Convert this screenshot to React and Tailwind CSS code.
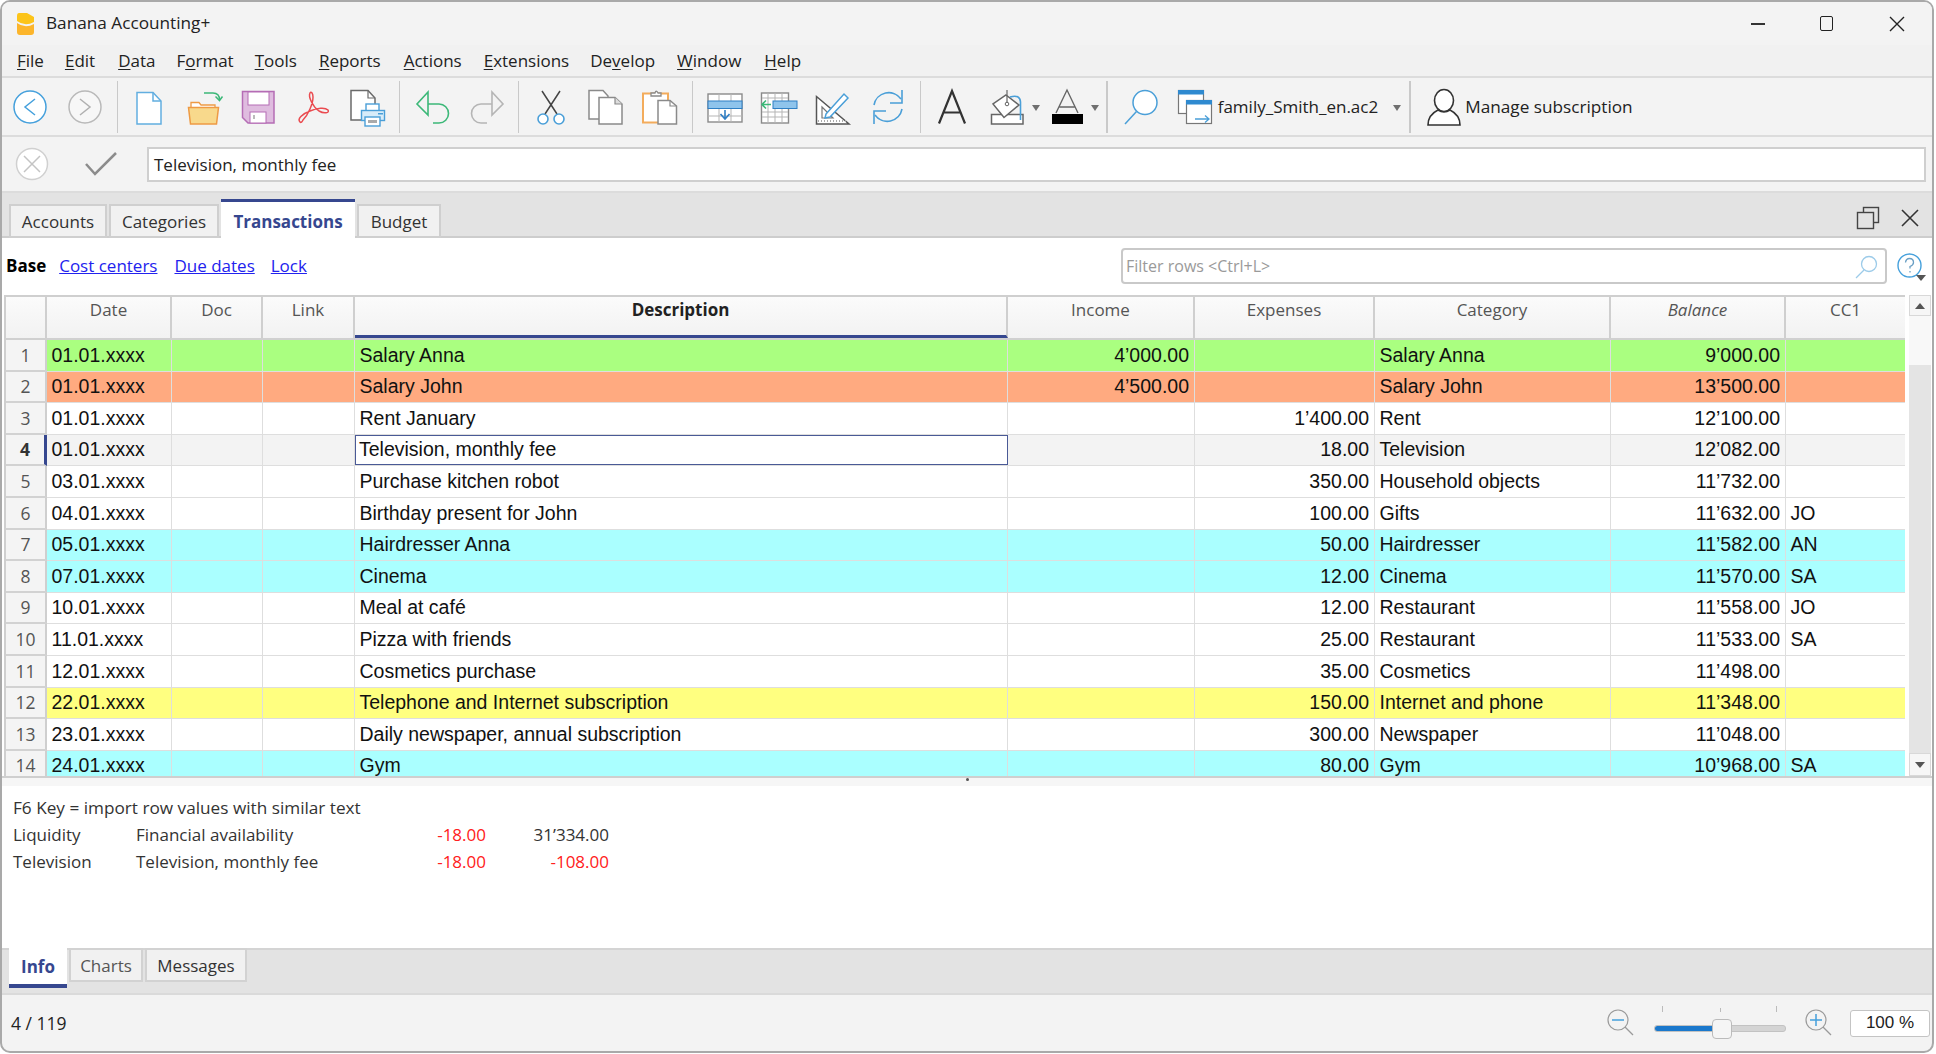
import React from "react";

const ui = { fontFamily: '"Open Sans", "Noto Sans", sans-serif' };

const S = ({ children, w = 40, h = 40 }) => (
  <svg width={w} height={h} viewBox={`0 0 ${w} ${h}`} fill="none" className="shrink-0">
    {children}
  </svg>
);

const Btn = ({ children }) => (
  <div className="w-[54.4px] h-[40px] shrink-0 flex items-center justify-center">{children}</div>
);

const Sep = ({ cls }) => <div className={"w-[1.5px] h-[52px] bg-[#c9c9c9] shrink-0 " + cls} />;

const B = "#4a9fd8";
const G = "#8a8a8a";
const D = "#444";

const Back = () => (
  <S>
    <circle cx="20" cy="20" r="16" fill="#fff" stroke="#45a0dc" strokeWidth="1.5" />
    <path d="M25 12 L15 20 L25 28" stroke="#45a0dc" strokeWidth="1.5" />
  </S>
);
const Fwd = () => (
  <S>
    <circle cx="20" cy="20" r="16" fill="#f7f7f7" stroke="#b9b9b9" strokeWidth="1.5" />
    <path d="M15 12 L25 20 L15 28" stroke="#b0b0b0" strokeWidth="1.5" />
  </S>
);
const NewDoc = () => (
  <S>
    <path d="M8 5.5 H24 L32 14 V37 H8 Z" fill="#fff" stroke="#62aee0" strokeWidth="1.5" />
    <path d="M24 5.5 V14 H32" stroke="#62aee0" strokeWidth="1.5" />
  </S>
);
const Open = () => (
  <S>
    <path d="M7 20 V15.5 H15 L17 18 H31 V20" fill="#fff" stroke="#ee9a44" strokeWidth="1.3" />
    <path d="M4.5 20.5 H34.5 L32.5 37 H6.5 Z" fill="#f8d98c" stroke="#ee9a44" strokeWidth="1.5" />
    <path d="M20 6 H29 Q35.5 6 35.5 13" stroke="#3cb878" strokeWidth="1.5" />
    <path d="M31.5 9.5 L35.5 13.5 L38.5 9.5" stroke="#3cb878" strokeWidth="1.5" />
  </S>
);
const Save = () => (
  <S>
    <path d="M4.5 4.5 H36 V36 H10 L4.5 30.5 Z" fill="#dfbcdf" stroke="#b56db5" strokeWidth="1.5" />
    <rect x="10" y="5" width="21" height="13" fill="#fff" stroke="#b56db5" />
    <rect x="12" y="25" width="16" height="11" fill="#fff" stroke="#b56db5" />
    <rect x="15" y="28" width="2" height="4" fill="#bbb" />
  </S>
);
const Pdf = () => (
  <S>
    <path
      d="M7 35 C4 32 9 27 17 24 C24 21 32 20 35 23 C37 26 31 27 26 24 C20 20 15 10 17 6 C18 4 20 6 20 10 C20 17 15 28 10 33 C9 35 8 36 7 35 Z"
      stroke="#ea4b50"
      strokeWidth="1.5"
    />
  </S>
);
const Print = () => (
  <S>
    <path d="M14 33 H4 V3.5 H21 L28 11 V18" fill="#fff" stroke="#6a6a6a" strokeWidth="1.5" />
    <path d="M21 3.5 V11 H28" stroke="#6a6a6a" strokeWidth="1.2" />
    <rect x="19" y="17" width="13" height="7" fill="#fff" stroke={B} strokeWidth="1.4" />
    <rect x="14.5" y="23.5" width="23" height="10" fill="#d7ecf9" stroke={B} strokeWidth="1.4" />
    <rect x="18" y="30" width="15" height="9" fill="#fff" stroke={B} strokeWidth="1.4" />
    <rect x="21" y="33" width="9" height="3" fill="#aaa" />
    <rect x="31" y="26" width="5" height="1.5" fill={B} />
  </S>
);
const Undo = ({ c = "#3cb878", flip }) => (
  <S>
    <g transform={flip ? "translate(40,0) scale(-1,1)" : undefined}>
      <path d="M15 5 L4 17 L15 28 Z" stroke={c} strokeWidth="1.6" fill="#f3f3f3" />
      <path d="M15 17 H26 A9.5 9.5 0 0 1 26 36 H20" stroke={c} strokeWidth="1.6" />
    </g>
  </S>
);
const Cut = () => (
  <S>
    <path d="M11 4 L26 27 M29 4 L14 27" stroke={D} strokeWidth="1.5" />
    <circle cx="12" cy="32" r="5" stroke={B} strokeWidth="1.6" fill="#fff" />
    <circle cx="28" cy="32" r="5" stroke={B} strokeWidth="1.6" fill="#fff" />
  </S>
);
const Copy = () => (
  <S>
    <path d="M4 3.5 H18 L23 9 V32 H4 Z" fill="#fff" stroke={G} strokeWidth="1.5" />
    <path d="M14 10.5 H30 L37 17 V37 H14 Z" fill="#fff" stroke={G} strokeWidth="1.5" />
    <path d="M30 10.5 V17 H37" fill="#ddd" stroke={G} strokeWidth="1.2" />
  </S>
);
const Paste = () => (
  <S>
    <rect x="3" y="6.5" width="25" height="29" fill="#fff" stroke="#f3ac5c" strokeWidth="2" />
    <path d="M11 9 V6 H15 Q16 2.5 18 6 H21 V9 Z" fill="#fff" stroke={G} strokeWidth="1.3" />
    <path d="M18 13.5 H30 L36.5 19 V37 H18 Z" fill="#fff" stroke={G} strokeWidth="1.5" />
    <path d="M30 13.5 V19 H36.5" stroke={G} strokeWidth="1.2" />
  </S>
);
const Table1 = () => (
  <S>
    <rect x="3" y="7" width="34" height="28" fill="#fff" stroke={G} strokeWidth="1.4" />
    <path d="M14 7 V14 M26 7 V14 M14 22 V35 M26 22 V35 M3 29 H37" stroke="#b5b5b5" />
    <rect x="3" y="14" width="34" height="7.5" fill="#8fc4ec" stroke="#2f7fc4" />
    <path d="M20 23 V31 M15.5 27 L20 32 L24.5 27" stroke="#2f7fc4" strokeWidth="1.6" />
  </S>
);
const Table2 = () => (
  <S>
    <rect x="2.5" y="6" width="27" height="30" fill="#fff" stroke={G} strokeWidth="1.4" />
    <path d="M9 6 V36 M16 6 V36 M23 6 V36 M3 11 H29 M3 25 H29 M3 30 H29" stroke="#b5b5b5" />
    <rect x="14" y="14" width="24" height="7.5" fill="#8fc4ec" stroke="#2f7fc4" />
    <path d="M3 17.5 H12 M7 13.5 L3 17.5 L7 21.5" stroke="#3cb878" strokeWidth="1.6" />
  </S>
);
const Square = () => (
  <S>
    <path d="M3.5 9.5 L36 37 H3.5 Z" fill="#fff" stroke="#555" strokeWidth="1.5" />
    <path d="M9 20 L20 31 H9 Z" stroke="#777" strokeWidth="1.2" />
    <path d="M5 34 H33" stroke="#aaa" strokeDasharray="1 2" strokeWidth="2" />
    <path d="M13 27 L31 7 L35 11 L17 30 L12 31 Z" fill="#fff" stroke={B} strokeWidth="1.5" />
  </S>
);
const Refresh = () => (
  <S>
    <path d="M6 18 A15 15 0 0 1 33 12" stroke={B} strokeWidth="1.6" />
    <path d="M34 3 V16 H22" stroke={B} strokeWidth="1.6" />
    <path d="M34 22 A15 15 0 0 1 7 28" stroke={B} strokeWidth="1.6" />
    <path d="M6 37 V24 H18" stroke={B} strokeWidth="1.6" />
  </S>
);
const BigA = () => (
  <S>
    <path d="M6 36.5 L19 4 L32 36.5 M10.5 25.5 H27.5" stroke="#333" strokeWidth="2.2" />
  </S>
);
const Fill = () => (
  <S>
    <rect x="4.5" y="27.5" width="31.5" height="9.5" fill="#fff" stroke="#666" strokeWidth="1.5" />
    <path d="M19 8 L32 18 L17 30.5 L6 17 Z" fill="#fff" stroke="#666" strokeWidth="1.5" />
    <path d="M20 3 V16" stroke="#666" strokeWidth="1.2" />
    <circle cx="20" cy="17" r="1.8" stroke="#666" />
    <path d="M23 10 Q33 7 33.5 15 V33" stroke={B} strokeWidth="1.6" />
  </S>
);
const ColorA = () => (
  <S w={36}>
    <path d="M6 26 L17 3 L28 26 M9.5 20 H24.5" stroke="#666" strokeWidth="1.4" />
    <rect x="2" y="27" width="31" height="10" fill="#000" />
  </S>
);
const Search = () => (
  <S>
    <circle cx="27" cy="15.5" r="12" fill="#fff" stroke={B} strokeWidth="1.5" />
    <path d="M18.5 24.5 L7 37" stroke={B} strokeWidth="1.5" />
  </S>
);
const FileIcon = () => (
  <S>
    <rect x="3.5" y="3.5" width="25" height="23" fill="#fff" stroke="#777" strokeWidth="1.2" />
    <rect x="3" y="3" width="26" height="4.5" fill="#2f8ad0" />
    <rect x="11.5" y="13.5" width="25" height="23" fill="#fff" stroke="#777" strokeWidth="1.2" />
    <rect x="11" y="13" width="26" height="4.5" fill="#2f8ad0" />
    <path d="M20 32 H34 M30 28.5 L34 32 L30 35.5" stroke={B} strokeWidth="1.3" />
  </S>
);
const User = () => (
  <S>
    <ellipse cx="20" cy="13.5" rx="9.5" ry="11" fill="#fff" stroke="#333" strokeWidth="1.6" />
    <path d="M4 38 C4 30 8 26 14 23 Q20 27 26 23 C32 26 36 30 36 38 Z" fill="#fff" stroke="#333" strokeWidth="1.6" />
  </S>
);
const Caret = ({ cls = "" }) => (
  <div className={"w-0 h-0 border-l-[4.5px] border-r-[4.5px] border-t-[6px] border-l-transparent border-r-transparent border-t-[#6f6f6f] shrink-0 " + cls} />
);

const Underl = ({ t, i }) => (
  <span>
    {t.slice(0, i)}
    <span className="underline underline-offset-2">{t[i]}</span>
    {t.slice(i + 1)}
  </span>
);

const menus = [
  ["File", 0, "ml-[15px]"],
  ["Edit", 0, "ml-[21px]"],
  ["Data", 0, "ml-[23px]"],
  ["Format", 1, "ml-[21px]"],
  ["Tools", 0, "ml-[21px]"],
  ["Reports", 0, "ml-[22px]"],
  ["Actions", 0, "ml-[23px]"],
  ["Extensions", 0, "ml-[22px]"],
  ["Develop", 2, "ml-[21px]"],
  ["Window", 0, "ml-[22px]"],
  ["Help", 0, "ml-[23px]"],
];

const cols = [
  ["Date", "w-[125px]"],
  ["Doc", "w-[91px]"],
  ["Link", "w-[92px]"],
  ["Description", "w-[653px]"],
  ["Income", "w-[187px]"],
  ["Expenses", "w-[180px]"],
  ["Category", "w-[236px]"],
  ["Balance", "w-[175px]"],
  ["CC1", "w-[121px]"],
];

const GREEN = "bg-[#aaff80]";
const ORANGE = "bg-[#ffaa80]";
const CYAN = "bg-[#aaffff]";
const YELLOW = "bg-[#ffff80]";
const CUR = "bg-[#f3f3f3]";
const WHITE = "bg-white";

const rows = [
  [1, "01.01.xxxx", "Salary Anna", "4’000.00", "", "Salary Anna", "9’000.00", "", GREEN],
  [2, "01.01.xxxx", "Salary John", "4’500.00", "", "Salary John", "13’500.00", "", ORANGE],
  [3, "01.01.xxxx", "Rent January", "", "1’400.00", "Rent", "12’100.00", "", WHITE],
  [4, "01.01.xxxx", "Television, monthly fee", "", "18.00", "Television", "12’082.00", "", CUR],
  [5, "03.01.xxxx", "Purchase kitchen robot", "", "350.00", "Household objects", "11’732.00", "", WHITE],
  [6, "04.01.xxxx", "Birthday present for John", "", "100.00", "Gifts", "11’632.00", "JO", WHITE],
  [7, "05.01.xxxx", "Hairdresser Anna", "", "50.00", "Hairdresser", "11’582.00", "AN", CYAN],
  [8, "07.01.xxxx", "Cinema", "", "12.00", "Cinema", "11’570.00", "SA", CYAN],
  [9, "10.01.xxxx", "Meal at café", "", "12.00", "Restaurant", "11’558.00", "JO", WHITE],
  [10, "11.01.xxxx", "Pizza with friends", "", "25.00", "Restaurant", "11’533.00", "SA", WHITE],
  [11, "12.01.xxxx", "Cosmetics purchase", "", "35.00", "Cosmetics", "11’498.00", "", WHITE],
  [12, "22.01.xxxx", "Telephone and Internet subscription", "", "150.00", "Internet and phone", "11’348.00", "", YELLOW],
  [13, "23.01.xxxx", "Daily newspaper, annual subscription", "", "300.00", "Newspaper", "11’048.00", "", WHITE],
  [14, "24.01.xxxx", "Gym", "", "80.00", "Gym", "10’968.00", "SA", CYAN],
];

const Cell = ({ w, right, children, cls = "border-r border-[#dedede] pl-[4.5px] pr-[5px]" }) => (
  <div
    className={
      "h-full shrink-0 flex items-center overflow-hidden whitespace-nowrap " +
      w + " " + (right ? "justify-end " : "") + cls
    }
  >
    {children}
  </div>
);

const Row = ({ r }) => {
  const [n, date, desc, inc, exp, cat, bal, cc, bg] = r;
  const cur = n === 4;
  return (
    <div className={"flex h-[31.6px] shrink-0 border-b border-[#dedede] text-[19.5px] text-[#111] " + bg} style={{ fontFamily: '"Liberation Sans", Arial, sans-serif' }}>
      <div
        className={
          "w-[41px] h-[calc(100%+1px)] shrink-0 flex items-center justify-center text-[17.5px] bg-[#f4f4f4] border-b-2 border-[#d2d2d2] " +
          (cur ? "font-bold text-[#333] border-r-[3px] border-r-[#36478f]" : "text-[#555] border-r-2 border-r-[#cfcfcf]")
        }
        style={ui}
      >
        {n}
      </div>
      <Cell w="w-[125px]">{date}</Cell>
      <Cell w="w-[91px]" />
      <Cell w="w-[92px]" />
      <Cell w="w-[653px]" cls={cur ? "border-[1.5px] border-[#4a5a96] bg-white px-[3px]" : undefined}>
        {desc}
      </Cell>
      <Cell w="w-[187px]" right>{inc}</Cell>
      <Cell w="w-[180px]" right>{exp}</Cell>
      <Cell w="w-[236px]">{cat}</Cell>
      <Cell w="w-[175px]" right>{bal}</Cell>
      <Cell w="w-[121px]">{cc}</Cell>
    </div>
  );
};

const Tab = ({ children, active, cls = "" }) => (
  <div
    className={
      "flex items-center justify-center shrink-0 text-[17px] " +
      (active
        ? "bg-white text-[#36478f] font-bold border-t-[3px] border-[#36478f] h-[41px] -mb-[4px] pt-[1px] "
        : "bg-[#f1f1f1] text-[#333] border-2 border-[#cfcfcf] h-[34px] -mb-[2px] pt-[1px] ") +
      cls
    }
  >
    {children}
  </div>
);

export default function App() {
  return (
    <div className="w-[1936px] h-[1054px] bg-white overflow-hidden" style={ui}>
      <div className="w-[1934px] h-[1053px] rounded-[10px] border-2 border-[#a9a9a9] bg-[#f3f3f3] flex flex-col overflow-hidden text-[#222]">
        {/* Title bar */}
        <div className="h-[43px] shrink-0 flex items-center bg-[#f3f3f3]">
          <svg width="20" height="22" viewBox="0 0 20 22" className="ml-[14px] shrink-0">
            <path d="M3 0 H11 L18 4 V9 Q9 14 1 8 V3 Q1 0 3 0 Z" fill="#fcc419" />
            <path d="M1 10 Q9 16 18 11 V19 Q18 22 15 22 H4 Q1 22 1 19 Z" fill="#fcb52b" />
          </svg>
          <div className="ml-[10px] text-[17.2px] -mt-[2px]">Banana Accounting+</div>
          <div className="ml-auto flex items-center">
            <div className="w-[14px] h-[1.5px] bg-[#333] mt-[1px]" />
            <div className="w-[13px] h-[15px] border-[1.5px] border-[#222] rounded-[2px] ml-[55px]" />
            <svg width="16" height="16" viewBox="0 0 16 16" className="ml-[56px] mr-[27px]">
              <path d="M1 1 L15 15 M15 1 L1 15" stroke="#222" strokeWidth="1.4" />
            </svg>
          </div>
        </div>
        {/* Menu */}
        <div className="h-[31px] shrink-0 flex items-center text-[17px] bg-[#f1f1f1] border-b-2 border-[#dcdcdc] box-content">
          {menus.map(([t, i, c]) => (
            <div key={t} className={c}>
              <Underl t={t} i={i} />
            </div>
          ))}
        </div>
        {/* Toolbar */}
        <div className="h-[59px] shrink-0 flex items-center pl-[1px] border-b-2 border-[#dcdcdc] text-[17px]">
          <Btn><Back /></Btn>
          <Btn><Fwd /></Btn>
          <Sep cls="ml-[5px]" />
          <div className="w-[4px] shrink-0" />
          <Btn><NewDoc /></Btn>
          <Btn><Open /></Btn>
          <Btn><Save /></Btn>
          <Btn><Pdf /></Btn>
          <Btn><Print /></Btn>
          <Sep cls="ml-[4.7px]" />
          <div className="w-[5.3px] shrink-0" />
          <Btn><Undo /></Btn>
          <Btn><Undo c="#b5b5b5" flip /></Btn>
          <Sep cls="ml-[3.4px]" />
          <div className="w-[4.5px] shrink-0" />
          <Btn><Cut /></Btn>
          <Btn><Copy /></Btn>
          <Btn><Paste /></Btn>
          <Sep cls="ml-[4.8px]" />
          <div className="w-[4px] shrink-0" />
          <Btn><Table1 /></Btn>
          <Btn><Table2 /></Btn>
          <Btn><Square /></Btn>
          <Btn><Refresh /></Btn>
          <Sep cls="ml-[5px]" />
          <div className="w-[4px] shrink-0" />
          <Btn><BigA /></Btn>
          <Btn><Fill /></Btn>
          <Caret cls="-ml-[2px] mt-[2px]" />
          <div className="w-[10px] shrink-0" />
          <ColorA />
          <Caret cls="ml-[4.5px] mt-[2px]" />
          <Sep cls="ml-[7.5px]" />
          <div className="ml-[10px] shrink-0"><Search /></div>
          <div className="ml-[17px] shrink-0"><FileIcon /></div>
          <div className="ml-[3px] whitespace-nowrap w-[175px] shrink-0">family_Smith_en.ac2</div>
          <Caret cls="mt-[2px]" />
          <Sep cls="ml-[8.5px]" />
          <div className="ml-[13.5px] shrink-0"><User /></div>
          <div className="ml-[1px] whitespace-nowrap text-[17.2px]">Manage subscription</div>
        </div>
        {/* Formula bar */}
        <div className="h-[56px] shrink-0 flex items-center border-b-2 border-[#dcdcdc] box-border">
          <svg width="36" height="36" viewBox="0 0 36 36" className="ml-[12px] shrink-0">
            <circle cx="18" cy="18" r="15.5" fill="#fff" stroke="#d0d0d0" strokeWidth="1.5" />
            <path d="M10 10 L26 26 M26 10 L10 26" stroke="#c4c4c4" strokeWidth="1.5" />
          </svg>
          <svg width="36" height="28" viewBox="0 0 36 28" className="ml-[34px] shrink-0">
            <path d="M2 14 L11 24 L32 3" stroke="#8c8c8c" strokeWidth="2.5" fill="none" />
          </svg>
          <div className="ml-[27px] w-[1779px] h-[35px] bg-white border-2 border-[#cfcfcf] flex items-center px-[5px] text-[17px]">
            <span className="pt-[1px]">Television, monthly fee</span>
          </div>
        </div>
        {/* Tabs strip */}
        <div className="h-[45px] shrink-0 bg-[#e3e3e3] flex items-end pl-[7px] gap-[2px] relative border-b-2 border-[#cdcdcd]">
          <Tab cls="w-[98px]">Accounts</Tab>
          <Tab cls="w-[110px]">Categories</Tab>
          <Tab active cls="w-[134px] z-10">Transactions</Tab>
          <Tab cls="w-[84px]">Budget</Tab>
          <div className="ml-auto self-center flex items-center pr-[12px] mt-[6px]">
            <svg width="24" height="24" viewBox="0 0 24 24">
              <rect x="7.5" y="1.5" width="15" height="15" fill="#e3e3e3" stroke="#444" strokeWidth="1.4" />
              <rect x="1.5" y="6.5" width="16" height="16" fill="#e3e3e3" stroke="#444" strokeWidth="1.4" />
            </svg>
            <svg width="20" height="20" viewBox="0 0 20 20" className="ml-[20px]">
              <path d="M2 2 L18 18 M18 2 L2 18" stroke="#333" strokeWidth="1.6" />
            </svg>
          </div>
        </div>
        {/* Sub views */}
        <div className="h-[57px] shrink-0 bg-white flex items-center pl-[4px] pb-[2px] text-[17px]">
          <div className="font-bold text-black">Base</div>
          <div className="ml-[13px] text-[#2222ee] underline">Cost centers</div>
          <div className="ml-[17px] text-[#2222ee] underline">Due dates</div>
          <div className="ml-[16px] text-[#2222ee] underline">Lock</div>
          <div className="ml-auto w-[766px] h-[36px] border-2 border-[#c9c9c9] rounded-[4px] flex items-center px-[3px] text-[#9a9a9a] text-[16px] justify-between">
            <span>Filter rows &lt;Ctrl+L&gt;</span>
            <svg width="26" height="26" viewBox="0 0 26 26" className="mr-[2px]">
              <circle cx="15" cy="11" r="7.5" fill="none" stroke="#9ccbe9" strokeWidth="1.3" />
              <path d="M10 17 L2 25" stroke="#9ccbe9" strokeWidth="1.3" />
            </svg>
          </div>
          <div className="relative ml-[9.5px] mr-[10.5px] w-[25px] h-[25px]">
            <svg width="25" height="25" viewBox="0 0 25 25">
              <circle cx="12.5" cy="12.5" r="11.5" fill="none" stroke="#45a0dc" strokeWidth="1.4" />
              <path d="M8.5 9.5 Q9 5.5 12.5 5.5 Q16.5 5.5 16.5 9.5 Q16.5 12 13 13.5 V15.5 M13 18 V19.5" fill="none" stroke="#6a9fc4" strokeWidth="1.3" />
            </svg>
            <div className="absolute -right-[4px] bottom-[-3px] w-0 h-0 border-l-[5px] border-r-[5px] border-t-[6px] border-l-transparent border-r-transparent border-t-[#555]" />
          </div>
        </div>
        {/* Table */}
        <div className="h-[483px] shrink-0 bg-white flex pl-[2px] border-b-2 border-[#cfcfcf]">
          <div className="w-[1901px] shrink-0 flex flex-col overflow-hidden border-t-2 border-l-2 border-[#cfcfcf]">
            <div className="h-[43px] shrink-0 flex bg-gradient-to-b from-[#fbfbfb] to-[#f2f2f2] border-b-2 border-[#d0d0d0] text-[17px] text-[#555]">
              <div className="w-[41px] h-full shrink-0 border-r-2 border-[#cfcfcf]" />
              {cols.map(([t, w]) => (
                <div
                  key={t}
                  className={
                    "shrink-0 h-full text-center border-r-2 border-[#cfcfcf] " + w +
                    (t === "Description" ? " font-bold text-[#222] border-b-[3px] border-b-[#36478f] h-[44px]" : "") +
                    (t === "Balance" ? " italic" : "")
                  }
                >
                  {t}
                </div>
              ))}
            </div>
            {rows.map((r) => (
              <Row key={r[0]} r={r} />
            ))}
          </div>
          <div className="w-[22px] ml-[4px] shrink-0 flex flex-col bg-[#e4e4e4]">
            <div className="h-[21px] shrink-0 bg-[#f6f6f6] border border-[#d8d8d8] flex items-center justify-center">
              <div className="w-0 h-0 border-l-[5px] border-r-[5px] border-b-[6px] border-l-transparent border-r-transparent border-b-[#555]" />
            </div>
            <div className="h-[49px] shrink-0 bg-[#f8f8f8]" />
            <div className="flex-1" />
            <div className="h-[23px] shrink-0 bg-[#f6f6f6] border border-[#d8d8d8] flex items-center justify-center">
              <div className="w-0 h-0 border-l-[5px] border-r-[5px] border-t-[6px] border-l-transparent border-r-transparent border-t-[#555]" />
            </div>
          </div>
        </div>
        {/* Info */}
        <div className="h-[8px] shrink-0 bg-[#f6f6f6] flex justify-center">
          <div className="w-[3px] h-[3px] rounded-full bg-[#555]" />
        </div>
        <div className="flex-1 bg-white text-[17px] text-[#333] pt-[8px] pl-[11px] flex flex-col min-h-0">
          <div className="h-[27px] flex items-center text-[17.2px]">F6 Key = import row values with similar text</div>
          <div className="h-[27px] flex items-center">
            <div className="w-[123px]">Liquidity</div>
            <div className="w-[221px]">Financial availability</div>
            <div className="w-[129px] text-right text-[#ff2020]">-18.00</div>
            <div className="w-[123px] text-right">31’334.00</div>
          </div>
          <div className="h-[27px] flex items-center">
            <div className="w-[123px]">Television</div>
            <div className="w-[221px]">Television, monthly fee</div>
            <div className="w-[129px] text-right text-[#ff2020]">-18.00</div>
            <div className="w-[123px] text-right text-[#ff2020]">-108.00</div>
          </div>
        </div>
        {/* Bottom tabs */}
        <div className="h-[47px] shrink-0 bg-[#e3e3e3] border-t-2 border-[#d4d4d4] border-b-2 border-b-[#dadada] flex items-start pl-[7px] gap-[2px] text-[17px]">
          <div className="w-[58px] h-[40px] shrink-0 -mt-[2px] pt-[2px] bg-white border-b-[4px] border-[#36478f] font-bold text-[#36478f] flex items-center justify-center">Info</div>
          <div className="w-[74px] h-[34px] shrink-0 -mt-[2px] pt-[2px] bg-[#f1f1f1] border-2 border-[#d2d2d2] flex items-center justify-center text-[#555]">Charts</div>
          <div className="w-[102px] h-[34px] shrink-0 -mt-[2px] pt-[2px] bg-[#f1f1f1] border-2 border-[#d2d2d2] flex items-center justify-center text-[#333]">Messages</div>
        </div>
        {/* Status */}
        <div className="h-[56px] shrink-0 flex items-center pl-[9px] text-[17.5px]">
          <div>4 / 119</div>
          <div className="ml-auto flex items-center pr-[2px]">
            <svg width="28" height="28" viewBox="0 0 28 28">
              <circle cx="12" cy="11" r="10" fill="none" stroke="#9a9a9a" strokeWidth="1.2" />
              <path d="M6 11 H18" stroke="#45a0dc" strokeWidth="1.5" />
              <path d="M19 18 L27 26" stroke="#9a9a9a" strokeWidth="1.2" />
            </svg>
            <div className="relative w-[132px] h-[7px] ml-[20px] mt-[10px] bg-[#d4d4d4] rounded-[3px] border border-[#c2c2c2]">
              <div className="h-full w-[60px] bg-[#1a78cc] rounded-[3px]" />
              <div className="absolute left-[57px] top-[-7px] w-[20px] h-[20px] bg-[#f5f5f5] border border-[#bbb] rounded-[4px]" />
              <div className="absolute left-[7px] top-[-20px] w-[1px] h-[6px] bg-[#bbb]" />
              <div className="absolute left-[65px] top-[-18px] w-[1px] h-[4px] bg-[#bbb]" />
              <div className="absolute left-[121px] top-[-20px] w-[1px] h-[6px] bg-[#bbb]" />
            </div>
            <svg width="28" height="28" viewBox="0 0 28 28" className="ml-[18px]">
              <circle cx="12" cy="11" r="10" fill="none" stroke="#9a9a9a" strokeWidth="1.2" />
              <path d="M6 11 H18 M12 5 V17" stroke="#45a0dc" strokeWidth="1.5" />
              <path d="M19 18 L27 26" stroke="#9a9a9a" strokeWidth="1.2" />
            </svg>
            <div className="ml-[18px] w-[80px] h-[27px] bg-white border-[1.5px] border-[#c4c4c4] rounded-[3px] flex items-center justify-center text-[17px] text-[#222]" style={{ fontFamily: '"Liberation Sans", sans-serif' }}>
              100 %
            </div>
          </div>
        </div>
      </div>
    </div>
  );
}
